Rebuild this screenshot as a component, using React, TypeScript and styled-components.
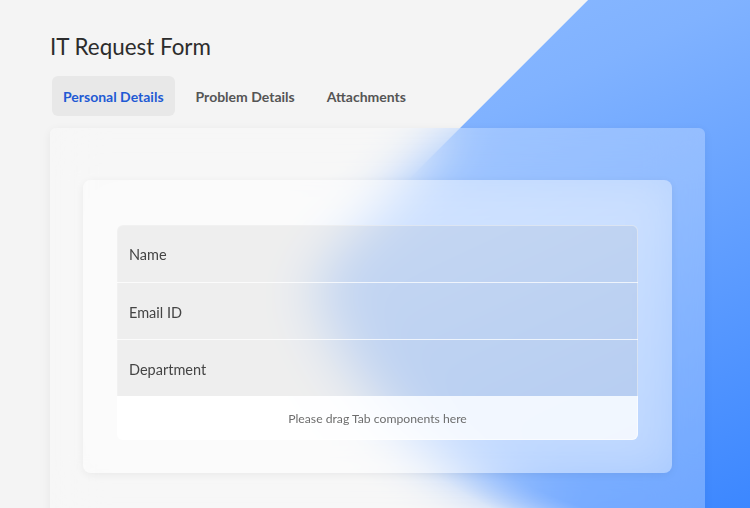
import React from "react";
import styled, { createGlobalStyle } from "styled-components";

const GlobalStyle = createGlobalStyle`
  html, body { margin: 0; padding: 0; background: #f4f4f4; }
  body { font-family: "Lato", "Noto Sans", sans-serif; -webkit-font-smoothing: antialiased; }
  * { box-sizing: border-box; }
`;

const Page = styled.div`
  position: relative;
  width: 750px;
  height: 508px;
  overflow: hidden;
  background: #f4f4f4;
  padding: 31px 45px 0 50px;
  isolation: isolate;
  &::before {
    content: "";
    position: absolute;
    inset: 0;
    z-index: -1;
    background: linear-gradient(155deg, #98c2ff 0%, #80b2ff 40%, #3c87ff 100%);
    -webkit-mask-image: linear-gradient(135deg, transparent 46.7%, #000 46.8%),
      radial-gradient(ellipse 480px 340px at 780px 220px, #000 94%, transparent 104%);
    -webkit-mask-composite: source-in;
    mask-image: linear-gradient(135deg, transparent 46.7%, #000 46.8%),
      radial-gradient(ellipse 480px 340px at 780px 220px, #000 94%, transparent 104%);
    mask-composite: intersect;
  }
`;

const Title = styled.h1`
  margin: 0;
  font-size: 22.4px;
  line-height: 32px;
  font-weight: 400;
  color: #2c2c2c;
`;

const TabList = styled.div`
  display: flex;
  gap: 10px;
  margin: 13px 0 12px 2px;
`;

const Tab = styled.div<{ $active?: boolean }>`
  height: 40px;
  padding: 0 11px;
  display: flex;
  align-items: center;
  border-radius: 6px;
  font-size: 14px;
  font-weight: 700;
  color: ${(p) => (p.$active ? "#1f5ad4" : "#555555")};
  background: ${(p) => (p.$active ? "#e8e8e8" : "transparent")};
`;

const Panel = styled.div`
  height: 400px;
  border-radius: 6px;
  background: rgba(255, 255, 255, 0.26);
  backdrop-filter: blur(26px);
  box-shadow: 0 2px 10px rgba(0, 0, 0, 0.06);
  padding: 52px 33px 0 33px;
`;

const Card = styled.div`
  border-radius: 8px;
  background: rgba(255, 255, 255, 0.36);
  backdrop-filter: blur(22px);
  box-shadow: 0 2px 8px rgba(0, 0, 0, 0.06);
  padding: 45px 34px 33px 34px;
`;

const Table = styled.div`
  border-radius: 6px;
  overflow: hidden;
  box-shadow: inset 0 0 0 1px rgba(255, 255, 255, 0.55);
`;

const Row = styled.div`
  height: 57px;
  display: flex;
  align-items: center;
  padding: 2px 0 0 12px;
  font-size: 14.5px;
  color: #444;
  background: rgba(0, 0, 0, 0.05);
  & + & {
    border-top: 1px solid rgba(255, 255, 255, 0.75);
  }
`;

const DropZone = styled.div`
  height: 44px;
  display: flex;
  align-items: center;
  justify-content: center;
  font-size: 12.2px;
  color: #6e6e6e;
  background: rgba(255, 255, 255, 0.78);
`;

export default function App() {
  return (
    <>
      <GlobalStyle />
      <Page>
        <Title>IT Request Form</Title>
        <TabList>
          <Tab $active>Personal Details</Tab>
          <Tab>Problem Details</Tab>
          <Tab>Attachments</Tab>
        </TabList>
        <Panel>
          <Card>
            <Table>
              <Row>Name</Row>
              <Row>Email ID</Row>
              <Row>Department</Row>
              <DropZone>Please drag Tab components here</DropZone>
            </Table>
          </Card>
        </Panel>
      </Page>
    </>
  );
}
